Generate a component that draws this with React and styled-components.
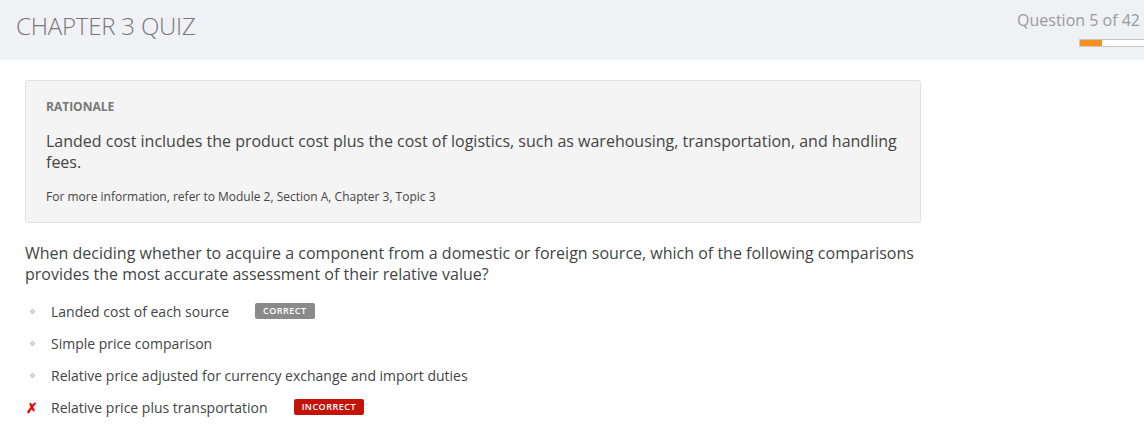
import styled, { createGlobalStyle } from 'styled-components'

const GlobalStyle = createGlobalStyle`
body {
    margin: 0;
    background: #fff;
    font-family: "Open Sans", "Noto Sans", sans-serif;
}
`

const options = [
    { text: 'Landed cost of each source', badge: 'correct' },
    { text: 'Simple price comparison' },
    { text: 'Relative price adjusted for currency exchange and import duties' },
    { text: 'Relative price plus transportation', badge: 'incorrect', picked: true },
]

function Bullet() {
    return (
        <svg width="7" height="7" viewBox="0 0 7 7">
            <path d="M3.5 0.5 L6.5 3.5 L3.5 6.5 L0.5 3.5 Z" fill="#c8c8c8" />
            <circle cx="3.5" cy="3.5" r="1" fill="#eee" />
        </svg>
    )
}

function App() {
    return (
        <>
            <GlobalStyle />
            <StyleHeader>
                <StyleTitle>CHAPTER 3 QUIZ</StyleTitle>
                <StyleProgress>
                    <StyleCount>Question 5 of 42</StyleCount>
                    <StyleBar>
                        <StyleFill style={{ width: `${(5 / 42) * 100 * 2.6}%` }} />
                    </StyleBar>
                </StyleProgress>
            </StyleHeader>
            <StyleMain>
                <StyleRationale>
                    <StyleLabel>RATIONALE</StyleLabel>
                    <StyleExplain>
                        Landed cost includes the product cost plus the cost of logistics, such as warehousing, transportation, and handling fees.
                    </StyleExplain>
                    <StyleRef>For more information, refer to Module 2, Section A, Chapter 3, Topic 3</StyleRef>
                </StyleRationale>
                <StyleQuestion>
                    When deciding whether to acquire a component from a domestic or foreign source, which of the following comparisons provides the most accurate assessment of their relative value?
                </StyleQuestion>
                <StyleList>
                    {options.map(o => (
                        <StyleOption key={o.text}>
                            <StyleMark>{o.picked ? <StyleCross>✗</StyleCross> : <Bullet />}</StyleMark>
                            <span>{o.text}</span>
                            {o.badge && <StyleBadge $kind={o.badge}>{o.badge.toUpperCase()}</StyleBadge>}
                        </StyleOption>
                    ))}
                </StyleList>
            </StyleMain>
        </>
    )
}

export default App

/**Style */

const StyleHeader = styled.header`
display: flex;
justify-content: space-between;
align-items: flex-start;
height: 60px;
background: #eff1f5;
overflow: hidden;
`
const StyleTitle = styled.h1`
margin: 9px 0 0 16px;
font-size: 24px;
font-weight: 300;
color: #777;
letter-spacing: -0.2px;
`
const StyleProgress = styled.div`
display: flex;
flex-direction: column;
align-items: flex-end;
margin-top: 9px;
width: 124px;
`
const StyleCount = styled.div`
font-size: 16px;
color: #999;
line-height: 22px;
padding-right: 4px;
white-space: nowrap;
`
const StyleBar = styled.div`
align-self: flex-start;
margin: 8px 0 0 59px;
width: 70px;
height: 6px;
background: #fff;
border: 1px solid #c8c8c8;
`
const StyleFill = styled.div`
height: 100%;
background: #f7901e;
`
const StyleMain = styled.main`
padding: 20px 0 0 25px;
width: 896px;
`
const StyleRationale = styled.section`
background: #f4f4f4;
border: 1px solid #e0e0e0;
border-radius: 3px;
padding: 17px 10px 17px 20px;
`
const StyleLabel = styled.div`
font-size: 12px;
font-weight: 700;
color: #777;
line-height: 17px;
`
const StyleExplain = styled.p`
margin: 16px 0 0 0;
font-size: 16px;
line-height: 21px;
color: #444;
`
const StyleRef = styled.p`
margin: 15px 0 0 0;
font-size: 12px;
line-height: 17px;
color: #444;
`
const StyleQuestion = styled.p`
margin: 20px 0 0 0;
font-size: 16px;
line-height: 21px;
color: #444;
`
const StyleList = styled.ul`
list-style: none;
margin: 10px 0 0 0;
padding: 0;
`
const StyleOption = styled.li`
display: flex;
align-items: center;
height: 32px;
font-size: 14px;
color: #444;
`
const StyleMark = styled.span`
display: flex;
align-items: center;
justify-content: center;
width: 14px;
margin-right: 12px;
`
const StyleCross = styled.span`
color: #e00;
font-size: 14px;
font-weight: 700;
`
const StyleBadge = styled.span`
margin-left: 26px;
padding: 0 8px;
height: 16px;
line-height: 16px;
font-size: 9px;
font-weight: 600;
letter-spacing: 0.5px;
color: #fff;
border-radius: 2px;
background: ${props => props.$kind === 'correct' ? '#8a8a8a' : '#c4140a'};
`
/****/
